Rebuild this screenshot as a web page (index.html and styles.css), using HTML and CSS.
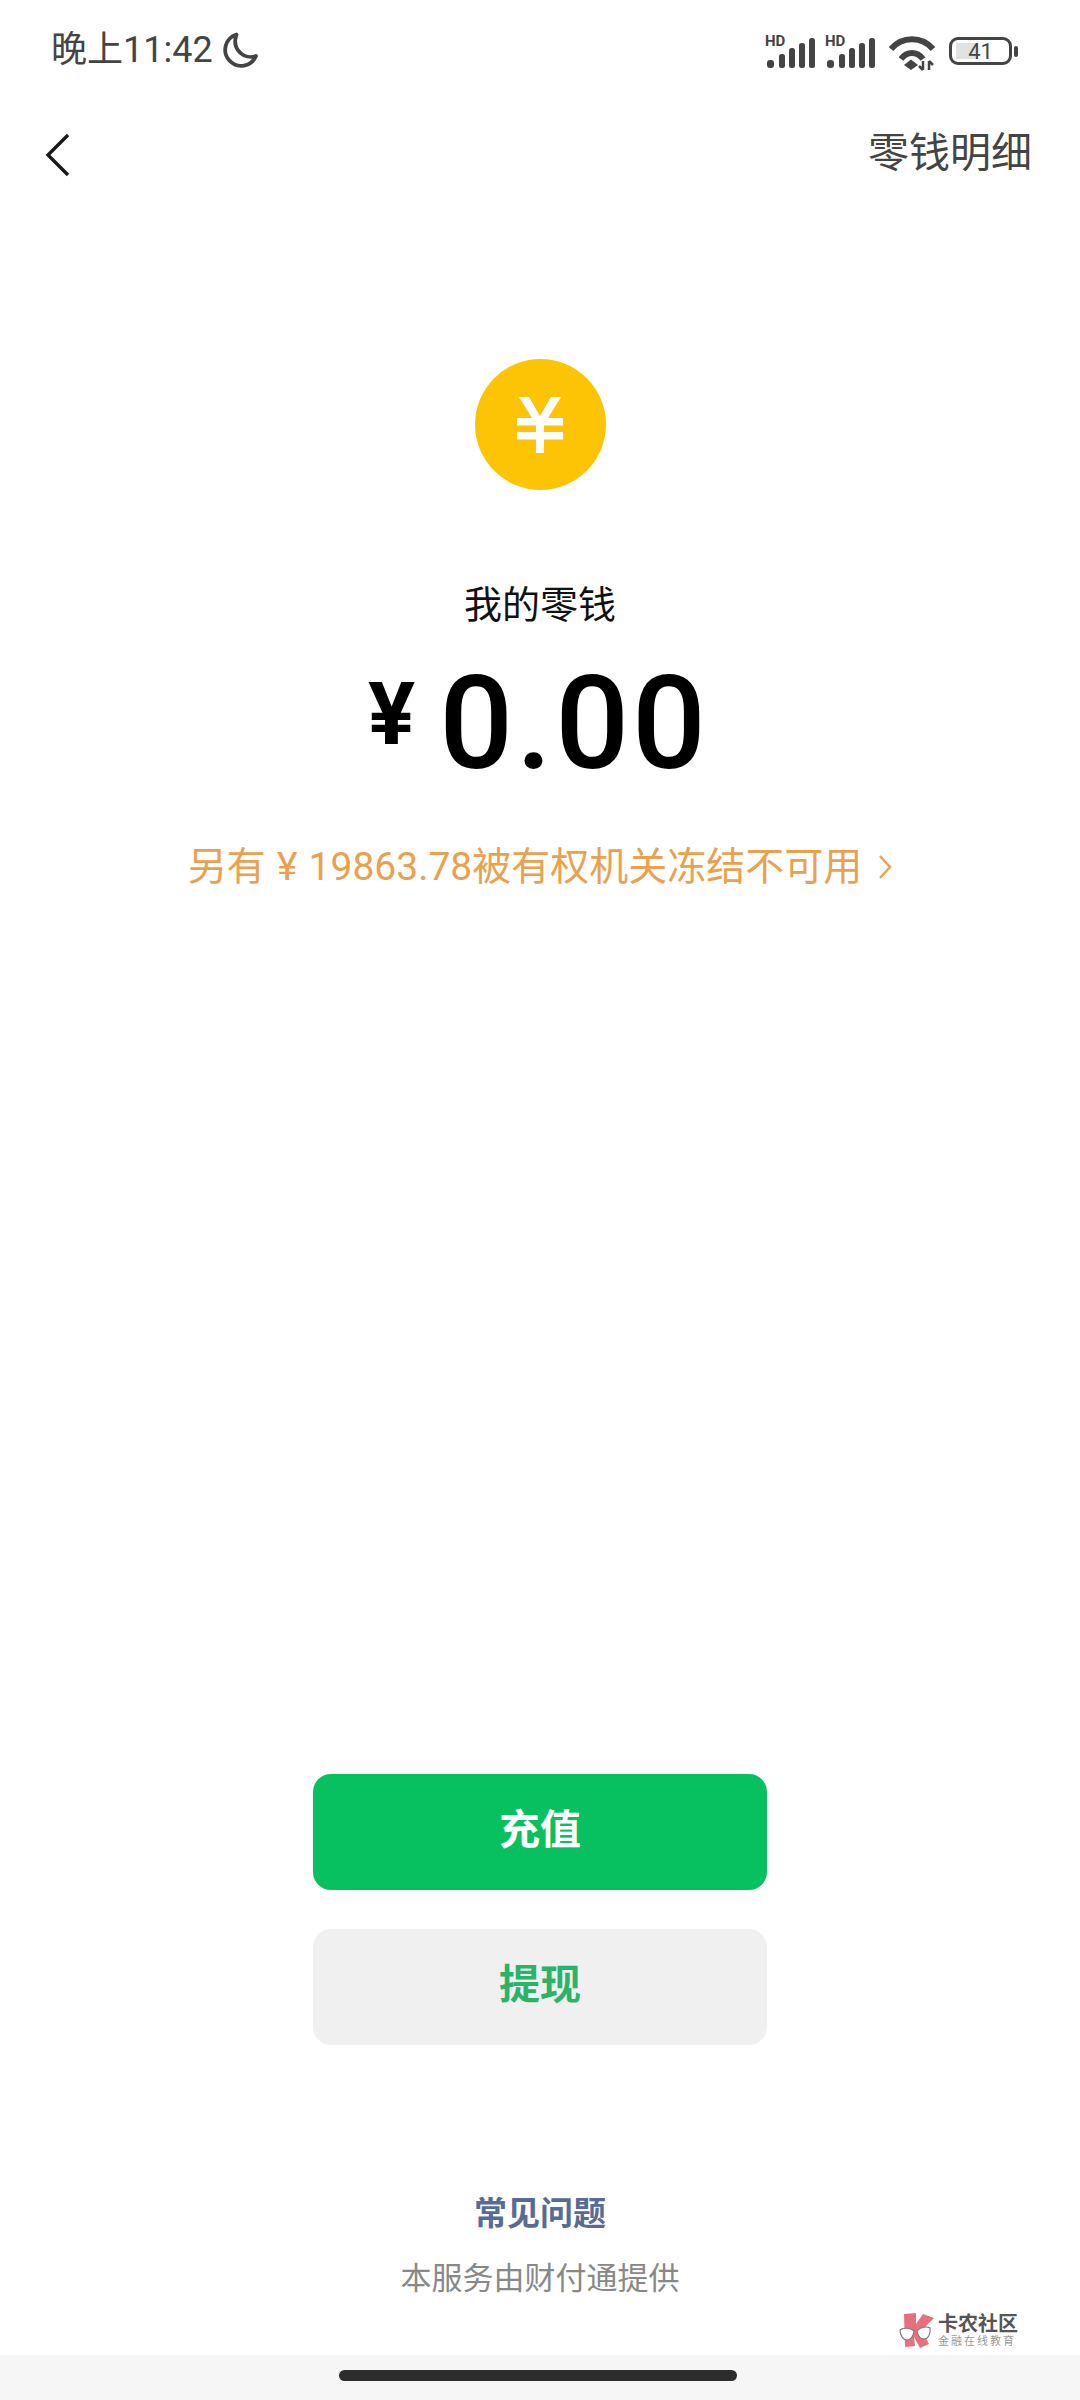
FILE: index.html
```html
<!DOCTYPE html>
<html lang="zh-CN">
  <head>
    <meta charset="UTF-8" />
    <meta name="viewport" content="width=device-width, initial-scale=1.0" />
    <title>我的零钱</title>
    <link rel="stylesheet" href="styles.css">
  </head>
  <body>
    <div class="phone">
      <div class="status-bar">
        <div class="status-left">
          <span class="clock">晚上11:42</span>
          <svg class="moon" viewBox="0 0 36 36" width="36" height="36">
            <path d="M14.500 2.500A16 16 0 1 0 34 24C23 28 9 18 14.500 2.500Z" fill="none" stroke="#444" stroke-width="3.800" stroke-linejoin="round" />
          </svg>
        </div>
        <div class="status-right">
          <div class="signal">
            <span class="hd">HD</span>
            <svg viewBox="0 0 52 32" width="52" height="32">
              <rect x="2" y="24" width="7" height="8" rx="3" />
              <rect x="14" y="18" width="6" height="14" rx="2.500" />
              <rect x="24" y="12" width="6" height="20" rx="2.500" />
              <rect x="34" y="7" width="6" height="25" rx="2.500" />
              <rect x="44" y="2" width="6" height="30" rx="2.500" />
            </svg>
          </div>
          <div class="signal">
            <span class="hd">HD</span>
            <svg viewBox="0 0 52 32" width="52" height="32">
              <rect x="2" y="24" width="7" height="8" rx="3" />
              <rect x="14" y="18" width="6" height="14" rx="2.500" />
              <rect x="24" y="12" width="6" height="20" rx="2.500" />
              <rect x="34" y="7" width="6" height="25" rx="2.500" />
              <rect x="44" y="2" width="6" height="30" rx="2.500" />
            </svg>
          </div>
          <svg viewBox="0 0 48 36" width="48" height="36" class="wifi">
            <path d="M3 14C14 1 34 1 45 14" />
            <path d="M13 24C19 16 29 16 35 24" />
            <path class="dot" d="M23 24.500L30 30L23 35L16 30Z" />
            <path class="arrows" d="M35 26V35M35 35L31 31M41 35V26M41 26L45 30" />
          </svg>
          <div class="battery">
            <div class="battery-body">
              <div class="battery-fill"></div>
              <span class="battery-num">41</span>
            </div>
            <div class="battery-cap"></div>
          </div>
        </div>
      </div>

      <div class="nav-bar">
        <svg class="back" viewBox="0 0 26 44" width="26" height="44">
          <path d="M23 2L3 22L23 42" fill="none" stroke="#1a1a1a" stroke-width="3.400" />
        </svg>
        <span class="nav-link">零钱明细</span>
      </div>

      <div class="balance">
        <div class="coin">
          <svg viewBox="0 0 48 56" width="48" height="56">
            <path d="M3 0H13L24 19L35 0H45L32 21H47V28.500H28V35H47V42.500H28V56H20V42.500H1V35H20V28.500H1V21H16Z" fill="#fff" />
          </svg>
        </div>
        <div class="balance-title">我的零钱</div>
        <div class="amount">
          <span class="amount-yen">¥</span>
          <span class="amount-num">0.00</span>
        </div>
        <div class="frozen">
          <span>另有 ¥ 19863.78被有权机关冻结不可用</span>
          <svg viewBox="0 0 14 26" width="14" height="26">
            <path d="M2 2L12 13L2 24" fill="none" stroke="#eaa14f" stroke-width="2.400" />
          </svg>
        </div>
      </div>

      <div class="actions">
        <div class="btn btn-primary">充值</div>
        <div class="btn btn-light">提现</div>
      </div>

      <div class="footer">
        <div class="faq">常见问题</div>
        <div class="provider">本服务由财付通提供</div>
      </div>

      <div class="home-area">
        <div class="home-bar"></div>
      </div>

      <!-- watermark over the page -->
      <div class="watermark">
        <svg viewBox="0 0 36 35" width="36" height="35">
          <path d="M5 1L17 0L17 11L24 1L35 5L23 17L30 31L21 35L15 24L16 33L6 34Z" fill="#ea6f7e" />
          <path d="M1 17C4 14 12 15 15 18C14 24 11 27 8 27C4 27 1 22 1 17ZM18 18C21 14 28 13 31 15C32 21 29 26 25 26C21 26 19 23 18 18Z" fill="#fff" stroke="#777" stroke-width="1.100" />
        </svg>
        <div class="wm-text">
          <div class="wm-name">卡农社区</div>
          <div class="wm-sub">金融在线教育</div>
        </div>
      </div>
    </div>
  </body>
</html>
```

FILE: styles.css
```css
* {
  box-sizing: border-box;
}
body {
  margin: 0;
  background: #fff;
  font-family: Roboto, "Noto Sans CJK SC", sans-serif;
}
.phone {
  position: relative;
  width: 1080px;
  height: 2400px;
  display: flex;
  flex-direction: column;
  overflow: hidden;
  background: #fff;
}

/* Status bar */
.status-bar {
  height: 100px;
  padding: 32px 62px 0 51px;
  display: flex;
  justify-content: space-between;
  align-items: flex-start;
}
.status-left {
  display: flex;
  align-items: center;
  gap: 9px;
}
.clock {
  font-size: 36px;
  line-height: 36px;
  color: #444;
}
.status-right {
  display: flex;
  align-items: flex-start;
  gap: 8px;
  padding-top: 3px;
}
.signal {
  position: relative;
  width: 52px;
  height: 33px;
}
.signal svg {
  position: absolute;
  left: 0;
  bottom: 0;
}
.signal rect {
  fill: #444;
}
.hd {
  position: absolute;
  left: 0;
  top: 0;
  font-size: 15px;
  line-height: 12px;
  font-weight: 700;
  color: #444;
}
.wifi {
  margin-left: 3px;
}
.wifi path {
  fill: none;
  stroke: #444;
  stroke-width: 6;
}
.wifi .dot {
  fill: #444;
  stroke: none;
}
.wifi .arrows {
  stroke-width: 2.500;
}
.battery {
  display: flex;
  align-items: center;
  gap: 2px;
  margin-left: 5px;
  padding-top: 2px;
}
.battery-body {
  position: relative;
  width: 63px;
  height: 28px;
  border: 3px solid #444;
  border-radius: 9px;
  display: flex;
  align-items: center;
  justify-content: center;
}
.battery-fill {
  position: absolute;
  left: 4px;
  top: 3px;
  bottom: 3px;
  width: 20px;
  background: #e2e2e2;
}
.battery-num {
  position: relative;
  font-size: 22px;
  color: #444;
}
.battery-cap {
  width: 4px;
  height: 11px;
  border-radius: 2px;
  background: #444;
}

/* Nav */
.nav-bar {
  height: 110px;
  padding: 0 48px 0 45px;
  display: flex;
  justify-content: space-between;
  align-items: center;
}
.nav-link {
  font-size: 41px;
  line-height: 50px;
  margin-top: -5px;
  color: #444;
}

/* Balance */
.balance {
  display: flex;
  flex-direction: column;
  align-items: center;
  padding-top: 149px;
  height: 1564px;
}
.coin {
  width: 131px;
  height: 131px;
  border-radius: 50%;
  background: #fdc405;
  display: flex;
  align-items: center;
  justify-content: center;
}
.balance-title {
  margin-top: 90px;
  font-size: 38px;
  line-height: 50px;
  color: #111;
}
.amount {
  margin-top: 22px;
  display: flex;
  align-items: flex-start;
  height: 130px;
  color: #000;
  margin-left: -3px;
}
.amount-yen {
  font-size: 88px;
  line-height: 88px;
  font-weight: 700;
  margin-right: 24px;
  margin-top: 18px;
}
.amount-num {
  font-size: 130px;
  font-weight: 500;
  letter-spacing: 3px;
  line-height: 130px;
  margin-top: 7px;
}
.frozen {
  margin-top: 60px;
  display: flex;
  align-items: center;
  gap: 16px;
  font-size: 39px;
  line-height: 50px;
  word-spacing: 1.500px;
  color: #eaa14f;
}

/* Buttons */
.actions {
  display: flex;
  flex-direction: column;
  align-items: center;
  gap: 39px;
}
.btn {
  width: 454px;
  height: 116px;
  border-radius: 18px;
  font-size: 41px;
  line-height: 50px;
  font-weight: 700;
  padding-bottom: 5px;
  display: flex;
  align-items: center;
  justify-content: center;
}
.btn-primary {
  background: #07c160;
  color: #fff;
}
.btn-light {
  background: #f0f0f0;
  color: #2bb36a;
}

/* Footer */
.footer {
  display: flex;
  flex-direction: column;
  align-items: center;
  padding-top: 147px;
  height: 310px;
}
.faq {
  font-size: 33px;
  font-weight: 700;
  line-height: 44px;
  color: #576b95;
}
.provider {
  margin-top: 21px;
  font-size: 31px;
  line-height: 44px;
  color: #888;
}
.home-area {
  flex: 1;
  background: #f6f6f6;
  display: flex;
  justify-content: center;
  padding-top: 15px;
}
.home-bar {
  width: 398px;
  height: 11px;
  border-radius: 6px;
  background: #2c2c2c;
  margin-right: 4px;
}

/* Watermark */
.watermark {
  position: absolute;
  left: 899px;
  top: 2313px;
  display: flex;
  gap: 3px;
  align-items: center;
}
.wm-name {
  font-size: 20px;
  line-height: 22px;
  font-weight: 700;
  color: #555;
}
.wm-sub {
  font-size: 11px;
  line-height: 13px;
  letter-spacing: 2px;
  color: #999;
}
```
